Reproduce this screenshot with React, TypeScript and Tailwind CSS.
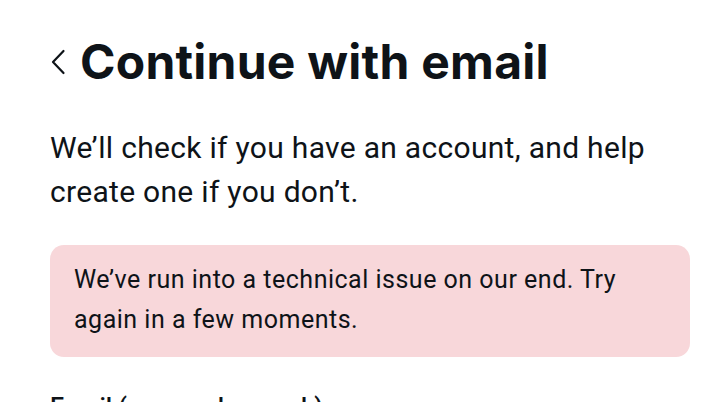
import React from "react";

export default function App() {
  return (
    <div className="w-[712px] h-[402px] overflow-hidden bg-white text-[#0e1318]">
      <div className="pl-[50px] pt-[36px] w-[690px]">
        <div className="flex items-center h-[52px]">
          <svg width="16" height="26" viewBox="0 0 16 26" className="ml-[1px]">
            <path d="M12.5 2 L2 13 L12.5 24" fill="none" stroke="#0e1318" strokeWidth="2.2" strokeLinecap="round" strokeLinejoin="round" />
          </svg>
          <h1 className="ml-[13px] text-[48px] leading-[52px] font-bold tracking-[0.005em] [font-family:Inter,sans-serif]">
            Continue with email
          </h1>
        </div>
        <p className="mt-[38px] text-[30px] leading-[44px] tracking-[0.3px] [font-family:Roboto,sans-serif]">
          We’ll check if you have an account, and help create one if you don’t.
        </p>
        <div className="mt-[31px] w-[640px] rounded-[14px] bg-[#f8d7da] pl-[24px] pr-[24px] pt-[15px] pb-[17px]">
          <p className="text-[25px] leading-[40px] tracking-[0.5px] [font-family:Roboto,sans-serif]">
            We’ve run into a technical issue on our end. Try again in a few moments.
          </p>
        </div>
        <p className="mt-[35px] text-[25px] leading-[32px] font-medium [font-family:Roboto,sans-serif]">
          Email (personal or work)
        </p>
      </div>
    </div>
  );
}
